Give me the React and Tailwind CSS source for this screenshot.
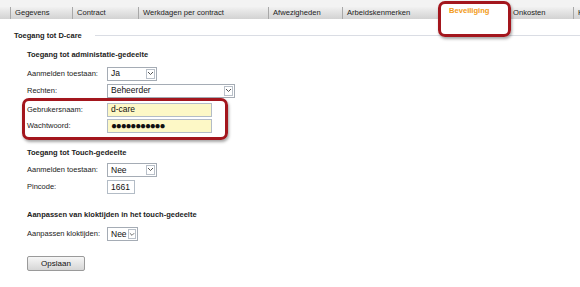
import React from 'react';

const tabs = [
  { label: 'Gegevens', w: 62 },
  { label: 'Contract', w: 66 },
  { label: 'Werkdagen per contract', w: 130 },
  { label: 'Afwezigheden', w: 74 },
  { label: 'Arbeidskenmerken', w: 98 },
  { label: 'Beveiliging', w: 68, active: true },
  { label: 'Onkosten', w: 65 },
  { label: 'K', w: 20 },
];

function Chevron() {
  return (
    <svg width="7" height="5" viewBox="0 0 7 5" className="block">
      <path d="M1 1 L3.5 3.5 L6 1" fill="none" stroke="#555" strokeWidth="1" />
    </svg>
  );
}

function Select({ value, width, btn = 12 }) {
  return (
    <div
      className="flex h-[14px] items-stretch border border-[#a5acb5] bg-white"
      style={{ width }}
    >
      <div className="flex flex-1 items-center pl-[3px] text-[8.5px] leading-none text-[#111]">{value}</div>
      <div
        className="m-[1px] flex items-center justify-center border border-[#b9c0c9] bg-white"
        style={{ width: btn - 3 }}
      >
        <Chevron />
      </div>
    </div>
  );
}

function Field({ value, width, yellow, password }) {
  return (
    <div
      className={`flex h-[14px] items-center border border-[#b3bcc6] pl-[3px] leading-none text-[#111] ${
        yellow ? 'bg-[#fdf8c6]' : 'bg-white'
      } ${password ? 'text-[10px] tracking-[-1.2px]' : 'text-[8.5px]'}`}
      style={{ width }}
    >
      {value}
    </div>
  );
}

function Row({ label, children, mt }) {
  return (
    <div className={`flex items-center ${mt}`}>
      <div className="w-[80px] text-[7.5px] text-[#222]">{label}</div>
      {children}
    </div>
  );
}

export default function App() {
  return (
    <div className="relative h-[287px] w-[580px] overflow-hidden bg-white font-['Liberation_Sans',Arial,sans-serif] text-[#222]">
      {/* tab strip */}
      <div className="h-[7px] bg-[#f3f3f3]" />
      <div className="flex h-[12px] bg-gradient-to-b from-[#f1f1f1] to-[#d2d2d2] pl-[10px]">
        {tabs.map((t) =>
          t.active ? (
            <div
              key={t.label}
              className="-mt-[3px] flex h-[15px] shrink-0 items-start border-l border-[#a8a8a8] bg-white pl-[8px] pt-[1px] text-[7.6px] font-bold text-[#f29a17]"
              style={{ width: t.w }}
            >
              {t.label}
            </div>
          ) : (
            <div
              key={t.label}
              className="flex shrink-0 items-center border-l border-[#a8a8a8] pl-[4px] text-[7.6px] text-[#222]"
              style={{ width: t.w }}
            >
              {t.label}
            </div>
          )
        )}
      </div>

      {/* section header */}
      <div className="mt-[11px] flex items-center pl-[14px]">
        <div className="text-[7.5px] font-bold">Toegang tot D-care</div>
        <div className="ml-[13px] h-[1px] flex-1 bg-[#dadde4]" />
      </div>

      <div className="relative pl-[27px]">
        <div className="mt-[8px] text-[7.5px] font-bold">Toegang tot administatie-gedeelte</div>
        <Row label="Aanmelden toestaan:" mt="mt-[6px]">
          <Select value="Ja" width={50} />
        </Row>
        <Row label="Rechten:" mt="mt-[3px]">
          <Select value="Beheerder" width={128} />
        </Row>
        <Row label="Gebrukersnaam:" mt="mt-[5px]">
          <Field value="d-care" width={105} yellow />
        </Row>
        <Row label="Wachtwoord:" mt="mt-[2px]">
          <Field value="●●●●●●●●●●●" width={105} yellow password />
        </Row>

        <div className="mt-[14px] text-[7.5px] font-bold">Toegang tot Touch-gedeelte</div>
        <Row label="Aanmelden toestaan:" mt="mt-[5px]">
          <Select value="Nee" width={50} />
        </Row>
        <Row label="Pincode:" mt="mt-[3px]">
          <Field value="1661" width={28} />
        </Row>

        <div className="mt-[15px] text-[7.5px] font-bold">Aanpassen van kloktijden in het touch-gedeelte</div>
        <Row label="Aanpassen kloktijden:" mt="mt-[7px]">
          <Select value="Nee" width={31} btn={11} />
        </Row>

        <button className="mt-[15px] block h-[15px] w-[58px] rounded-[2px] border border-[#9a9a9a] bg-gradient-to-b from-[#f6f6f6] to-[#d6d6d6] text-[8px] leading-none text-[#111]">
          Opslaan
        </button>
      </div>

      {/* annotation highlights */}
      <div className="pointer-events-none absolute left-[22px] top-[98px] h-[42px] w-[206px] rounded-[7px] border-[3px] border-[#a3161d] shadow-[1px_2px_3px_rgba(0,0,0,0.35)]" />
      <div className="pointer-events-none absolute left-[438px] top-[1px] h-[36px] w-[73px] rounded-[7px] border-[3px] border-[#a3161d] shadow-[1px_2px_3px_rgba(0,0,0,0.35)]" />
    </div>
  );
}
